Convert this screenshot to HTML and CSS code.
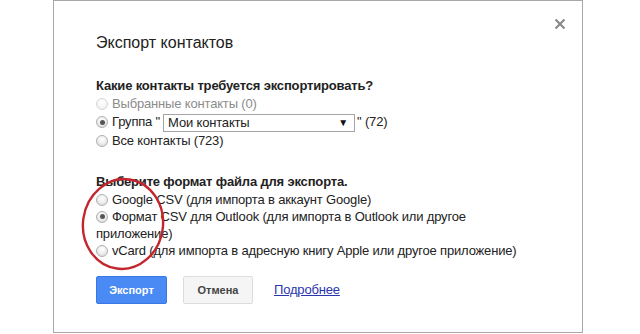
FILE: index.html
```html
<!DOCTYPE html>
<html lang="ru">
<head>
<meta charset="utf-8">
<title>Экспорт контактов</title>
<link rel="stylesheet" href="styles.css">
</head>
<body>
<div class="dialog">
  <svg class="close" width="12" height="12" viewBox="0 0 12 12"><path d="M1.5 1.5 L10.5 10.5 M10.5 1.5 L1.5 10.5" stroke="#858585" stroke-width="2" fill="none"/></svg>
  <div class="title">Экспорт контактов</div>

  <div class="heading">Какие контакты требуется экспортировать?</div>
  <div class="group">
    <div class="row disabled"><span class="radio"></span>Выбранные контакты (0)</div>
    <div class="row row-select"><span class="radio checked"></span>Группа "<span class="select"><span class="select-text">Мои контакты</span><span class="arrow">▼</span></span>" (72)</div>
    <div class="row"><span class="radio"></span>Все контакты (723)</div>
  </div>

  <div class="heading">Выберите формат файла для экспорта.</div>
  <div class="group group-format">
    <div class="row"><span class="radio"></span>Google CSV (для импорта в аккаунт Google)</div>
    <div class="row"><span class="radio checked"></span>Формат CSV для Outlook (для импорта в Outlook или другое приложение)</div>
    <div class="row"><span class="radio"></span>vCard (для импорта в адресную книгу Apple или другое приложение)</div>
  </div>

  <div class="buttons">
    <span class="btn btn-primary">Экспорт</span>
    <span class="btn btn-cancel">Отмена</span>
    <a class="link" href="#">Подробнее</a>
  </div>

  <svg class="mark" width="90" height="100" viewBox="0 0 90 100"><ellipse cx="44" cy="48" rx="40" ry="45" transform="rotate(8 44 48)" fill="none" stroke="#c3262c" stroke-width="2.4"/></svg>
</div>
</body>
</html>
```

FILE: styles.css
```css
html, body {
  margin: 0;
  padding: 0;
  background: #ffffff;
}

body {
  font-family: "Liberation Sans", Arial, sans-serif;
  font-size: 13px;
  letter-spacing: -0.17px;
  color: #222222;
}

.dialog {
  position: relative;
  box-sizing: border-box;
  margin-left: 53px;
  width: 530px;
  height: 333px;
  border: 1px solid #a8a8a8;
  padding: 32px 0 0 42px;
  background: #ffffff;
}

.close {
  position: absolute;
  top: 17px;
  right: 16px;
}

.title {
  font-size: 16px;
  line-height: 20px;
  letter-spacing: 0;
  color: #222222;
  margin-bottom: 24px;
}

.heading {
  font-weight: bold;
  line-height: 17px;
  margin-bottom: 1px;
}

.group {
  margin-bottom: 24px;
}

.group-format {
  width: 434px;
  margin-bottom: 17px;
}

.row {
  line-height: 17px;
}

.row-select {
  line-height: 19px;
}

.disabled {
  color: #8c8c8c;
}

.radio {
  display: inline-block;
  box-sizing: border-box;
  width: 12px;
  height: 12px;
  border: 1px solid #b0b0b0;
  border-radius: 50%;
  background: radial-gradient(circle at 50% 35%, #ffffff 0%, #f0f0f0 45%, #d2d2d2 100%);
  vertical-align: -2px;
  margin-right: 4px;
  position: relative;
}

.disabled .radio {
  border-color: #d8d8d8;
  background: radial-gradient(circle at 50% 35%, #ffffff 0%, #f7f7f7 50%, #e8e8e8 100%);
}

.radio.checked::after {
  content: "";
  position: absolute;
  left: 2.5px;
  top: 2.5px;
  width: 5px;
  height: 5px;
  border-radius: 50%;
  background: #555555;
}

.select {
  display: inline-flex;
  align-items: center;
  justify-content: space-between;
  box-sizing: border-box;
  width: 192px;
  height: 18px;
  border: 1px solid #a5a5a5;
  padding: 0 6px 0 4px;
  vertical-align: middle;
  margin: 0 2px 0 3px;
  line-height: 16px;
  color: #222222;
}

.arrow {
  font-size: 10px;
  color: #111111;
}

.buttons {
  display: flex;
  align-items: center;
}

.btn {
  box-sizing: border-box;
  height: 28px;
  line-height: 26px;
  border-radius: 2px;
  font-size: 11px;
  font-weight: bold;
  letter-spacing: 0;
  text-align: center;
}

.btn-primary {
  width: 71px;
  background: #4a8af4;
  border: 1px solid #3b78e7;
  color: #ffffff;
}

.btn-cancel {
  width: 70px;
  margin-left: 16px;
  background: #f5f5f5;
  border: 1px solid #dcdcdc;
  color: #444444;
}

.link {
  margin-left: 21px;
  color: #2a35b0;
  text-decoration: underline;
}

.mark {
  position: absolute;
  left: 25px;
  top: 175px;
}
```
